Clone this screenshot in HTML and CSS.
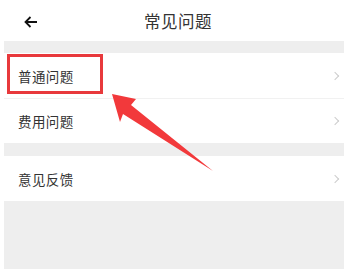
FILE: index.html
```html
<!DOCTYPE html>
<html lang="zh-CN">
<head>
    <meta charset="UTF-8"/>
    <title>常见问题</title>
    <link rel="stylesheet" href="styles.css">
</head>
<body>
    <div id="page">
        <div class="top_bar">
            <span class="back">
                <svg width="14" height="12" viewBox="0 0 14 12"><path d="M13 6H1.5M6.5 1L1.5 6l5 5" fill="none" stroke="#111" stroke-width="1.8"/></svg>
            </span>
            <span class="top_title">常见问题</span>
        </div>

        <div class="group">
            <div class="item">
                <span class="item_label">普通问题</span>
                <span class="chevron"></span>
                <div class="mark_box"></div>
            </div>
            <div class="item">
                <span class="item_label">费用问题</span>
                <span class="chevron"></span>
            </div>
        </div>

        <div class="group">
            <div class="item">
                <span class="item_label">意见反馈</span>
                <span class="chevron"></span>
            </div>
        </div>

        <div class="rest"></div>

        <svg class="mark_arrow" width="344" height="269" viewBox="0 0 344 269">
            <polygon points="112,94 136,99 131,105 213,171 123,114 120,122" fill="#f2393b"/>
        </svg>
    </div>
</body>
</html>
```

FILE: styles.css
```css
html, body {
    margin: 0;
    padding: 0;
    background: #fff;
}

body {
    font-family: "Noto Sans CJK SC", "Noto Sans", sans-serif;
    color: #333;
}

#page {
    position: relative;
    width: 344px;
    height: 269px;
    overflow: hidden;
    display: flex;
    flex-direction: column;
}

.top_bar {
    height: 41px;
    flex: none;
    display: flex;
    align-items: center;
    justify-content: center;
    padding-left: 12px;
    position: relative;
    background: #fff;
}

.back {
    position: absolute;
    left: 24px;
    top: 16px;
    line-height: 0;
}

.top_title {
    font-size: 16.5px;
    letter-spacing: 0.5px;
    color: #333;
}

.group {
    flex: none;
    margin-left: 4px;
    padding-top: 12px;
    background: #eeeeee;
}

.group + .group {
    padding-top: 13px;
}

.item {
    position: relative;
    height: 45px;
    background: #fff;
    display: flex;
    align-items: center;
    padding: 0 6px 0 14px;
}

.item + .item {
    height: 44px;
    border-top: 1px solid #f1f1f1;
}

.item_label {
    flex: 1;
    font-size: 13.5px;
    letter-spacing: 0.4px;
    color: #333;
}

.chevron {
    width: 5px;
    height: 5px;
    border-top: 1.3px solid #cccccc;
    border-right: 1.3px solid #cccccc;
    transform: rotate(45deg);
}

.mark_box {
    position: absolute;
    left: 3px;
    top: 1px;
    width: 90px;
    height: 34px;
    border: 3px solid #e8393c;
}

.rest {
    flex: 1;
    margin-left: 4px;
    background: #eeeeee;
}

.mark_arrow {
    position: absolute;
    left: 0;
    top: 0;
    pointer-events: none;
}
```
